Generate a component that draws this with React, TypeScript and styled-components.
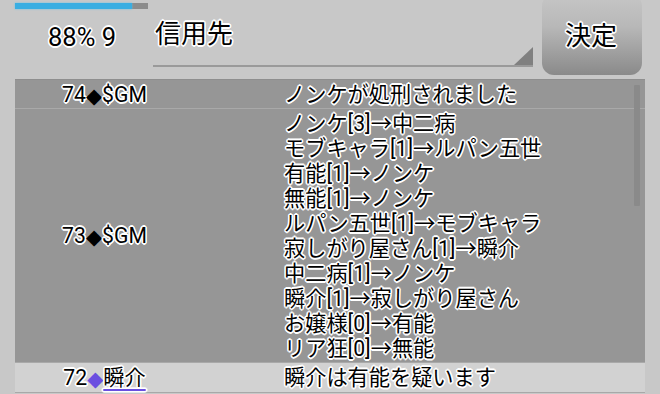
import React from "react";
import styled, { createGlobalStyle } from "styled-components";

const GlobalStyle = createGlobalStyle`
  html, body { margin: 0; padding: 0; }
  body {
    background: #c8c8c8;
    overflow: hidden;
    font-family: Roboto, "Noto Sans CJK JP", sans-serif;
    color: #000;
  }
`;

const outline = `
  text-shadow:
    -1.2px -1.2px 0 #fff, 1.2px -1.2px 0 #fff, -1.2px 1.2px 0 #fff, 1.2px 1.2px 0 #fff,
    0 -1.6px 0 #fff, 0 1.6px 0 #fff, -1.6px 0 0 #fff, 1.6px 0 0 #fff;
`;

const Screen = styled.div`
  width: 660px;
  height: 394px;
  display: flex;
  flex-direction: column;
  overflow: hidden;
`;

const Header = styled.div`
  height: 79px;
  display: flex;
  padding-left: 15px;
  flex-shrink: 0;
`;

const Status = styled.div`
  width: 133px;
  display: flex;
  flex-direction: column;
`;

const Progress = styled.div`
  margin-top: 3px;
  height: 6px;
  background: #8c8c8c;
  display: flex;
`;

const ProgressFill = styled.div`
  height: 100%;
  background: #3aaee2;
  box-shadow: 0 0 2px #5cc4f0;
`;

const StatusText = styled.div`
  margin-top: 13px;
  padding-left: 1px;
  text-align: center;
  font-size: 25.5px;
  line-height: 30px;
  ${outline}
`;

const Select = styled.div`
  margin-left: 5px;
  width: 380px;
  height: 65px;
  border-bottom: 2px solid #9a9a9a;
  display: flex;
  align-items: flex-end;
  justify-content: space-between;
`;

const SelectText = styled.div`
  align-self: flex-start;
  margin-top: 16px;
  padding-left: 2px;
  font-size: 26px;
  line-height: 32px;
  font-family: "Noto Sans CJK JP", sans-serif;
  ${outline}
`;

const Caret = styled.svg`
  display: block;
  width: 19px;
  height: 18px;
`;

const Button = styled.div`
  margin-left: 9px;
  margin-top: -6px;
  width: 100px;
  height: 81px;
  border-radius: 12px;
  background: linear-gradient(#c6c6c6 0%, #b8b8b8 40%, #8a8a8a 100%);
  display: flex;
  align-items: center;
  justify-content: center;
  padding: 0 2px 2px 0;
  box-sizing: border-box;
  font-size: 26px;
  font-family: "Noto Sans CJK JP", sans-serif;
  ${outline}
`;

const Table = styled.div`
  margin: 0 15px;
  width: 630px;
  position: relative;
  border-top: 1px solid #8e8e8e;
  font-size: 21.2px;
  line-height: 25px;
`;

const Row = styled.div<{ $light?: boolean }>`
  display: grid;
  grid-template-columns: 180px 1fr;
  align-items: center;
  background: ${(p) => (p.$light ? "#d2d2d2" : "#969696")};
  border-bottom: 1px solid ${(p) => (p.$light ? "#a8a8a8" : "#a9a9a9")};
  padding: ${(p) => (p.$light ? "2px 0 2px" : "1.5px 0")};
`;

const Speaker = styled.div`
  text-align: center;
  white-space: nowrap;
  padding-right: 1px;
  ${outline}
`;

const Diamond = styled.span<{ $color?: string }>`
  font-family: "DejaVu Sans", sans-serif;
  font-size: 21px;
  line-height: 20px;
  color: ${(p) => p.$color || "#000"};
  text-shadow: none;
  vertical-align: -1px;
`;

const Name = styled.span<{ $link?: boolean }>`
  ${(p) =>
    p.$link
      ? `text-decoration: underline; text-decoration-color: #6a4fe0; text-decoration-thickness: 2px; text-underline-offset: 4px;`
      : ""}
`;

const Message = styled.div`
  padding-left: 89px;
  white-space: nowrap;
  ${outline}
`;

const Line = styled.div``;

const Scrollbar = styled.div`
  position: absolute;
  right: 5px;
  top: 5px;
  width: 6px;
  height: 121px;
  background: #8a8a8a;
  border-radius: 1px;
`;

const votes = [
  "ノンケ[3]→中二病",
  "モブキャラ[1]→ルパン五世",
  "有能[1]→ノンケ",
  "無能[1]→ノンケ",
  "ルパン五世[1]→モブキャラ",
  "寂しがり屋さん[1]→瞬介",
  "中二病[1]→ノンケ",
  "瞬介[1]→寂しがり屋さん",
  "お嬢様[0]→有能",
  "リア狂[0]→無能",
];

export default function App() {
  return (
    <Screen>
      <GlobalStyle />
      <Header>
        <Status>
          <Progress>
            <ProgressFill style={{ width: "88%" }} />
          </Progress>
          <StatusText>88% 9</StatusText>
        </Status>
        <Select>
          <SelectText>信用先</SelectText>
          <Caret viewBox="0 0 19 18">
            <polygon points="19,0 19,18 0,18" fill="#808080" />
          </Caret>
        </Select>
        <Button>決定</Button>
      </Header>
      <Table>
        <Row>
          <Speaker>
            74<Diamond>◆</Diamond>$GM
          </Speaker>
          <Message>
            <Line>ノンケが処刑されました</Line>
          </Message>
        </Row>
        <Row>
          <Speaker>
            73<Diamond>◆</Diamond>$GM
          </Speaker>
          <Message>
            {votes.map((v) => (
              <Line key={v}>{v}</Line>
            ))}
          </Message>
        </Row>
        <Row $light>
          <Speaker>
            72<Diamond $color="#6a4fe0">◆</Diamond>
            <Name $link>瞬介</Name>
          </Speaker>
          <Message>
            <Line>瞬介は有能を疑います</Line>
          </Message>
        </Row>
        <Scrollbar />
      </Table>
    </Screen>
  );
}
